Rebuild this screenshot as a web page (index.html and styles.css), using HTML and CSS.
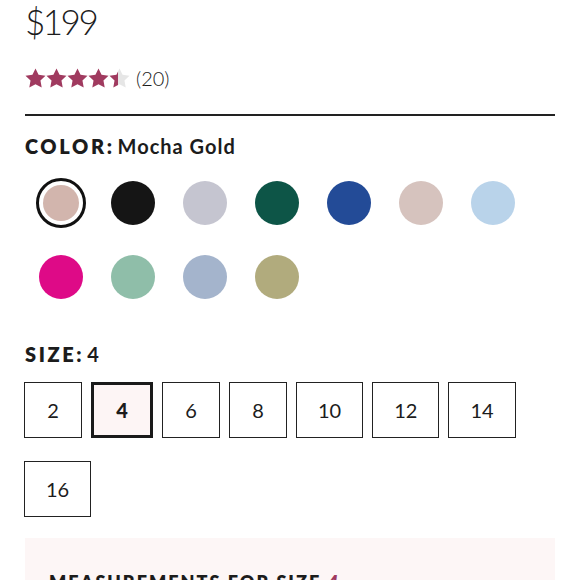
FILE: index.html
```html
<!DOCTYPE html>
<html>
<head>
<meta charset="utf-8">
<link rel="stylesheet" href="styles.css">
</head>
<body>
<div class="page">
  <div class="price">$199</div>
  <div class="rating">
    <div class="stars">
      <svg class="star" viewBox="1 1 22 22"><path d="M12 1.5l3.2 6.6 7.3 1-5.3 5.1 1.3 7.2L12 18l-6.5 3.4 1.3-7.2L1.5 9.1l7.3-1z"/></svg>
      <svg class="star" viewBox="1 1 22 22"><path d="M12 1.5l3.2 6.6 7.3 1-5.3 5.1 1.3 7.2L12 18l-6.5 3.4 1.3-7.2L1.5 9.1l7.3-1z"/></svg>
      <svg class="star" viewBox="1 1 22 22"><path d="M12 1.5l3.2 6.6 7.3 1-5.3 5.1 1.3 7.2L12 18l-6.5 3.4 1.3-7.2L1.5 9.1l7.3-1z"/></svg>
      <svg class="star" viewBox="1 1 22 22"><path d="M12 1.5l3.2 6.6 7.3 1-5.3 5.1 1.3 7.2L12 18l-6.5 3.4 1.3-7.2L1.5 9.1l7.3-1z"/></svg>
      <svg class="star" viewBox="1 1 22 22"><defs><linearGradient id="half" x1="0" x2="1" y1="0" y2="0"><stop offset="0.42" stop-color="#a03a5f"/><stop offset="0.42" stop-color="#e6e6e6"/></linearGradient></defs><path fill="url(#half)" d="M12 1.5l3.2 6.6 7.3 1-5.3 5.1 1.3 7.2L12 18l-6.5 3.4 1.3-7.2L1.5 9.1l7.3-1z"/></svg>
    </div>
    <span class="count">(20)</span>
  </div>
  <hr class="rule">
  <div class="label"><span class="key">COLOR:</span><span class="val">Mocha Gold</span></div>
  <div class="swatches">
    <div class="cell selected"><span class="sw" style="background:#d2b5ad"></span></div>
    <div class="cell"><span class="sw" style="background:#151515"></span></div>
    <div class="cell"><span class="sw" style="background:#c5c5d0"></span></div>
    <div class="cell"><span class="sw" style="background:#0d5547"></span></div>
    <div class="cell"><span class="sw" style="background:#234b97"></span></div>
    <div class="cell"><span class="sw" style="background:#d6c3be"></span></div>
    <div class="cell"><span class="sw" style="background:#b9d3ea"></span></div>
    <div class="cell"><span class="sw" style="background:#de0a87"></span></div>
    <div class="cell"><span class="sw" style="background:#8fbea9"></span></div>
    <div class="cell"><span class="sw" style="background:#a4b4cc"></span></div>
    <div class="cell"><span class="sw" style="background:#b1ab7d"></span></div>
  </div>
  <div class="label size-label"><span class="key">SIZE:</span><span class="val">4</span></div>
  <div class="sizes">
    <div class="size">2</div>
    <div class="size active">4</div>
    <div class="size">6</div>
    <div class="size">8</div>
    <div class="size">10</div>
    <div class="size">12</div>
    <div class="size">14</div>
    <div class="size">16</div>
  </div>
  <div class="measure">
    <div class="mtitle">MEASUREMENTS FOR SIZE <span class="mnum">4</span></div>
  </div>
</div>
</body>
</html>
```
FILE: styles.css
```css
* { box-sizing: border-box; }
html, body { margin: 0; padding: 0; background: #fff; }
body {
  font-family: Lato, "Liberation Sans", sans-serif;
  color: #1c1c1c;
  overflow: hidden;
}
.page {
  padding: 0 25px;
  width: 580px;
}
.price {
  font-size: 35px;
  font-weight: 300;
  line-height: 40px;
  margin-top: 1px;
  letter-spacing: -2.5px;
}
.rating {
  display: flex;
  align-items: center;
  margin-top: 25px;
  height: 24px;
}
.stars { display: flex; gap: 0; }
.star { width: 21px; height: 21px; fill: #a03a5f; display: block; }
.count {
  font-size: 20px;
  font-weight: 300;
  margin-left: 6px;
}
.rule {
  border: 0;
  height: 2px;
  background: #222;
  margin: 24px 0 0 0;
}
.label {
  display: flex;
  align-items: baseline;
  margin-top: 18px;
  font-size: 20px;
  font-weight: 700;
  line-height: 24px;
}
.label .key { letter-spacing: 2.6px; font-weight: 800; margin-right: 3px; }
.label .val { letter-spacing: 1px; }
.swatches {
  display: flex;
  flex-wrap: wrap;
  gap: 24px 22px;
  padding-left: 11px;
  margin-top: 20px;
  width: 520px;
}
.cell {
  width: 50px;
  height: 50px;
  display: flex;
  align-items: center;
  justify-content: center;
  border-radius: 50%;
}
.sw {
  width: 44px;
  height: 44px;
  border-radius: 50%;
  display: block;
}
.cell.selected { border: 3px solid #111; }
.cell.selected .sw { width: 36px; height: 36px; }
.size-label { margin-top: 40px; }
.sizes {
  display: flex;
  flex-wrap: wrap;
  gap: 23px 9px;
  margin-top: 16px;
  margin-left: -1px;
}
.size {
  height: 56px;
  min-width: 58px;
  padding: 0 21px;
  border: 1px solid #222;
  display: flex;
  align-items: center;
  justify-content: center;
  font-size: 20px;
  font-weight: 400;
}
.size.active {
  border: 3px solid #1a1a1a;
  background: #fdf5f5;
  font-weight: 900;
  min-width: 62px;
}
.measure {
  margin-top: 21px;
  background: #fdf6f6;
  height: 80px;
  padding: 33px 0 0 24px;
}
.mtitle {
  font-size: 18px;
  font-weight: 800;
  letter-spacing: 2px;
}
.mnum { color: #a03a5f; font-style: italic; }
```
